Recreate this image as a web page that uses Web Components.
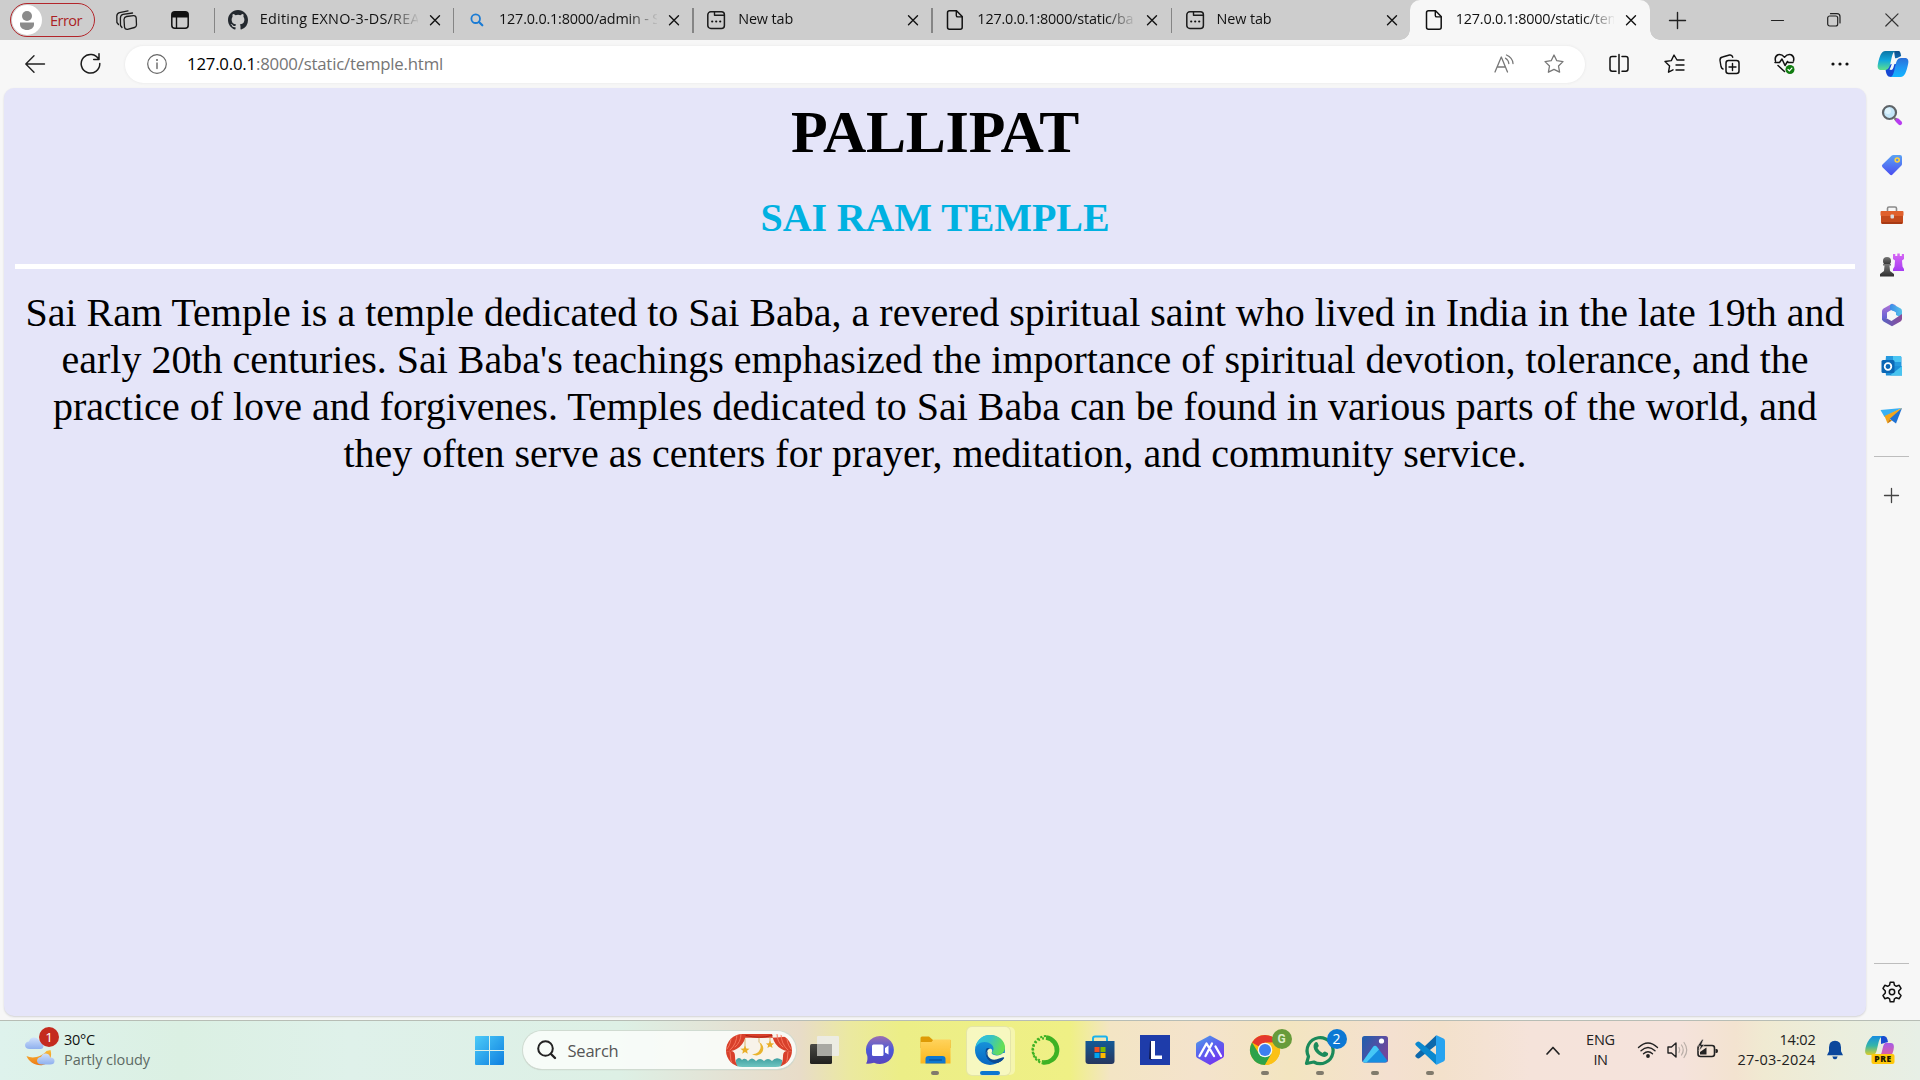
<!DOCTYPE html>
<html lang="en"><head><meta charset="utf-8"><title>temple.html</title>
<style>
html,body{margin:0;height:100%;overflow:hidden}
body{font-family:"Open Sans","Noto Sans",sans-serif;color:#111}
</style></head><body>
<browser-desktop></browser-desktop>
<script>
const svg=(w,h,body,vb)=>`<svg width="${w}" height="${h}" viewBox="${vb||`0 0 ${w} ${h}`}" fill="none" stroke-linecap="round" stroke-linejoin="round">${body}</svg>`;
const L=(d,c='#1b1b1b',w=1.4)=>`<path d="${d}" stroke="${c}" stroke-width="${w}"/>`;
const F=(d,c)=>`<path d="${d}" fill="${c}"/>`;
const G=(id,stops,x2=0,y2=1)=>`<linearGradient id="${id}" x1="0" y1="0" x2="${x2}" y2="${y2}">${stops.map((s,i)=>`<stop offset="${i/(stops.length-1)}" stop-color="${s}"/>`).join('')}</linearGradient>`;
const ICONS={
person:svg(30,30,`<circle cx="15" cy="15" r="15" fill="#fff"/><circle cx="15" cy="11" r="5" fill="#8b8b8b"/><path d="M8 17.5h14v2c0 3-3 5.5-7 5.5s-7-2.500-7-5.500z" fill="#8b8b8b"/>`),
workspaces:svg(22,20,`<path d="M10.500 6.500L17.500 5.700Q20 5.600 20.200 8L20.500 15Q20.300 17 18.500 17.500L11.500 19.300Q8.800 19.500 8.500 17L8 9.500Q8.200 7 10.500 6.500z" stroke="#1b1b1b" stroke-width="1.300"/>`+L('M6 17.500L4.500 15.500 4.400 8Q4.500 5 7 4.400L16.500 3','#1b1b1b',1.3)+L('M2.500 14.500L.9 12.500 .8 6Q.9 3.400 3.500 2.700L12 .9','#1b1b1b',1.3)),
tabactions:svg(18,18,`<rect x=".8" y=".8" width="16.400" height="16.400" rx="3" stroke="#111" stroke-width="1.500"/><path d="M1 3.500Q1 1 3.500 1h11Q17 1 17 3.500V6.500H1z" fill="#111"/>`+L('M5.500 6v11','#111',1.4)),
github:svg(20,20,F('M8 0C3.580 0 0 3.580 0 8c0 3.540 2.290 6.530 5.470 7.590.4.070.55-.17.55-.38v-1.490c-2.230.48-2.700-.94-2.700-.94-.36-.93-.89-1.180-.89-1.180-.73-.5.050-.49.050-.49.800.06 1.230.83 1.230.83.71 1.220 1.870.87 2.330.66.070-.52.280-.87.510-1.070-1.780-.2-3.640-.89-3.640-3.950 0-.87.310-1.590.820-2.150-.08-.2-.36-1.020.080-2.120 0 0 .67-.21 2.200.820a7.600 7.600 0 0 1 4 0c1.530-1.040 2.200-.82 2.200-.82.44 1.100.16 1.920.080 2.120.51.56.82 1.270.82 2.150 0 3.070-1.870 3.750-3.650 3.950.29.25.54.73.54 1.480v2.200c0 .21.15.46.55.38A8 8 0 0 0 16 8c0-4.420-3.580-8-8-8z','#24292f'),'0 0 16 16'),
bluesearch:svg(20,20,`<circle cx="8.700" cy="8.700" r="4.300" stroke="#1a7bd4" stroke-width="1.800"/>`+L('M12 12L15.300 15.300','#1a7bd4',2.2)),
newtab:svg(20,20,`<rect x="1.800" y="1.800" width="16.600" height="16.600" rx="3" stroke="#1b1b1b" stroke-width="1.500"/>`+L('M8.500 2v3.300h9.500')+`<g fill="#111"><circle cx="6.200" cy="11.500" r="1.100"/><circle cx="10.200" cy="11.500" r="1.100"/><circle cx="14.200" cy="11.500" r="1.100"/></g>`),
file:svg(20,20,L('M4.500 .8h7l5.700 5.700v10.700q0 2-2 2H4.500q-2 0-2-2V2.800q0-2 2-2z','#111',1.5)+L('M11.300 1v4.400q0 1.500 1.500 1.500H17','#111',1.4)),
close:svg(12,12,L('M1.500 1.700L10.500 10.700M10.500 1.700L1.500 10.700','#111',1.4)),
plus:svg(17,17,L('M8.500 .5v16M.5 8.500h16','#222',1.4)),
plus2:svg(15,15,L('M7.500 .5v14M.5 7.500h14','#444',1.3)),
min:svg(13,3,L('M.5 1.500h12','#222',1.2)),
restore:svg(14,14,`<rect x=".7" y="3" width="10" height="10" rx="2" stroke="#222" stroke-width="1.200"/>`+L('M3.500 .7h6.500q3 0 3 3V10','#222',1.2)),
wclose:svg(14,14,L('M.8 .8L13 13M13 .8L.8 13','#333',1.2)),
back:svg(20,18,L('M19.500 9H1M9 .8L.8 9L9 17.200','#222',1.4)),
reload:svg(21,21,L('M18.800 6.500A9.300 9.300 0 1 0 19.800 10.500M13.700 6.500h5.300V.8','#1b1b1b',1.5)),
info:svg(20,20,`<circle cx="10" cy="10" r="9.300" stroke="#666" stroke-width="1.200"/>`+L('M10 9v5.500','#666',1.4)+`<circle cx="10" cy="6" r="1" fill="#666"/>`),
readaloud:svg(21,20,L('M1 18L7.300 3L13.500 18M3.200 13h8.200','#777',1.300)+L('M11.500 4.200Q14.500 6 14.800 9.500M12.500 1Q18.500 3.500 19 9.500','#777',1.300)),
star:svg(20,20,L('M10 1l2.800 5.700 6.200.9-4.500 4.400 1.100 6.200L10 15.300l-5.600 2.900 1.100-6.200L1 7.600l6.200-.9z','#777',1.3)),
split:svg(20,20,L('M7 2.500H3.200Q1 2.500 1 4.700V15q0 2.200 2.200 2.200H7M13 2.500h3.800Q19 2.500 19 4.700V15q0 2.200-2.200 2.200H13M10 .5v19','#111',1.5)),
favs:svg(21,20,L('M13 6L10 1 7.300 6.600 1 7.500l4.600 4.400L4.500 18.200 9 15.800M13 6h7M12 11h8M12 16h8','#111',1.4)),
collections:svg(21,20,`<rect x="7" y="6.500" width="13" height="13" rx="2.500" stroke="#111" stroke-width="1.500"/>`+L('M13.500 9.500v7M10 13h7M4 15Q2.500 14.500 2 12.500L1 6.500Q.7 3.500 3.500 3L10.500 1Q13 .5 13.800 3.200','#111',1.4)),
heart:svg(22,21,L('M1.500 8Q.3 3.500 4 1.800 7.500.8 10.500 4.200 13.500.8 17 1.800 20.700 3.500 19.500 8M1 9.500h4.500L8 6l3 6.500 2.500-4 1 1H19M4 12.500l6.500 6','#111',1.5)+`<circle cx="16" cy="16.500" r="4.500" fill="#107c10"/>`+L('M14 16.500l1.400 1.400 2.500-2.700','#fff',1.2)),
dots:svg(18,4,`<g fill="#111"><circle cx="2" cy="2" r="1.600"/><circle cx="9" cy="2" r="1.600"/><circle cx="16" cy="2" r="1.600"/></g>`),
copilot:svg(32,28,`<defs>${G('a',['#0b75a5','#12a8dc','#5ee08c'])}${G('b',['#2b6fd8','#2196f3','#13b5ff'])}${G('d',['#0d4e86','#0f6fb8'])}</defs>`+F('M14 14L8.500 18.500C9 24 10 27 14 27h4l4-13z','#1648d4')+F('M17 1h4c2.500 0 2.500 2 3.200 5l-6 3z','url(#d)')+F('M8.500 1H19C15.500 1 15 7 13.500 13c-1 4-2 7-5.500 7H4c-3 0-4-2.500-3-6.500C2.500 7 4 1 8.500 1z','url(#a)')+F('M23.500 27H13c3.500 0 4-6 5.500-12 1-4 2-7 5.500-7h4c3 0 4 2.500 3 6.500C29.500 21 28 27 23.500 27z','url(#b)')+F('M17.500 8.500L20 8Q18 11 17 15.500T14 20L12.500 19.500Q14 17 15 13T17.500 8.500z','#f2fafa')),
s_search:svg(22,22,L('M14.500 15l1.500 1.500','#777',3)+L('M16.500 16.500L19 19','#b83cf0',4.2)+`<circle cx="8.500" cy="8.500" r="6.500" fill="#c4e6f8" stroke="#5f6468" stroke-width="2.200"/><circle cx="7" cy="7" r="3" fill="#def3fc"/>`),
s_tag:svg(22,22,`<defs>${G('a',['#5aa2f4','#4a4df0'])}</defs>`+F('M12.500 1H19q2 0 2 2v7q0 1-.8 1.800l-8.700 8.700q-1.300 1.300-2.600 0L1.500 13.200q-1.300-1.300 0-2.600L10.500 1.800Q11.300 1 12.500 1z','url(#a)')+`<circle cx="16.200" cy="6" r="2" stroke="#ffd23c" stroke-width="1.600"/>`),
s_tool:svg(24,20,L('M7.500 6V3.500Q7.500 2 9 2h6q1.500 0 1.500 1.500V6','#8a8a8a',1.6)+`<rect x="1" y="6" width="22" height="13" rx="1.500" fill="#c44a1c"/><rect x=".5" y="6" width="23" height="5" rx="1" fill="#e0602c"/><rect x="2" y="17" width="20" height="2" fill="#a83a14"/><rect x="10.500" y="9.500" width="3.500" height="4" rx="1" fill="#d8dce0"/>`),
s_chess:svg(25,24,`<defs>${G('a',['#777','#2f2f2f'])}${G('b',['#d768f4','#a63cf2'])}</defs>`+F('M14 1h2.300v2h2V.500h2.500V3h2V1H25v5l-2 1.500.5 6L25 16v2H14v-2l1.500-2.500.5-6L14 6z','url(#b)')+`<circle cx="8" cy="8" r="4" fill="url(#a)"/>`+F('M4 11h8v1.500h-1.500L11 18l4 3v2.500H1V21l4-3 .5-5.500H4z','url(#a)')),
s_m365:svg(22,24,`<defs>${G('a',['#3d8be8','#58c4ea'],1,0)}${G('b',['#b174d6','#5b60d4'])}${G('d',['#5863c4','#8b4c98'],1,0)}</defs>`+F('M11 .8L2.500 5.500Q1 6.500 1 8v9l5-2V9.500L14.500 4.500V2z','url(#b)')+F('M11 .8l8.700 4.800Q21 6.500 21 8v7l-6-3V9.500L9 6.500V2z','url(#a)')+F('M1 16q0 1.500 1.500 2.400L11 23.200l8.500-4.800Q21 17.500 21 16V11l-6 4-4.500 3L5 15z','url(#d)')+`<circle cx="11" cy="12" r="4" fill="#f7f7f7"/>`),
s_outlook:svg(22,22,`<path d="M5 1h14q1.500 0 1.500 1.500V12H4z" fill="#2599df"/><path d="M12 1h8v6h-8z" fill="#4ac5f3"/><path d="M4 11l17 0v9.500H5z" fill="#1b8ed8"/><path d="M21 11L9 20.500h12z" fill="#48c4f0"/><rect x=".5" y="5" width="13" height="13" rx="1.500" fill="#0b67b5"/><circle cx="7" cy="11.500" r="3.300" stroke="#fff" stroke-width="1.800"/>`),
s_plane:svg(24,18,F('M.5 3L22 1 4.500 10z','#38b0f4')+F('M22 1L16 16.500 8.500 11z','#1e72d4')+F('M4.500 9L22 1 9 12.500 7.500 16.500z','#f2a51c')+F('M7.500 16.500L9 12l3 1.500z','#c97a0a')),
gear:svg(22,22,L('M8.600 4.200L9.200 1.200h3.600l.6 3 1.900 1.100 2.900-1 1.800 3.100L17.700 9.900v2.200l2.300 2.500-1.800 3.100-2.900-1-1.900 1.100-.6 3H9.200l-.6-3-1.900-1.100-2.900 1L2 14.600l2.300-2.500V9.900L2 7.400l1.800-3.100 2.900 1z','#111',1.5)+`<circle cx="11" cy="11" r="2.700" stroke="#111" stroke-width="1.500"/>`),
weather:svg(34,34,`<defs>${G('a',['#cfe0fb','#8fb0ee'])}${G('b',['#f8bd3a','#ee7a15'])}</defs>`+F('M2.500 22c6 3 15 1 20-5l4-1c2 6-1 11-4 13.500-7 4.500-17 0-20-7.500z','url(#b)')+F('M6 15q-5 0-5-4Q1.500 7.500 5 7.500q1-4 5-4t5.500 4q4 0 4 4t-4 3.500z','url(#a)')+F('M18 30.500q-5 0-5-4 .5-3.500 4-3.500 1.500-4 5-3.500 4 .5 4 4 4.500 0 4.500 3.500T26 30.500z','url(#a)')),
start:svg(30,30,`<defs>${G('a',['#4ccbf8','#0e7fe0'],1,1)}</defs>`+F('M1 0h13v14H0V1q0-1 1-1zM15 0h13q1 0 1 1v13H15zM0 15h14v14H1q-1 0-1-1zM15 15h14v13q0 1-1 1H15z','url(#a)')),
search:svg(20,20,`<circle cx="8.500" cy="8.500" r="7.300" stroke="#222" stroke-width="2"/>`+L('M14 14L18 18','#222',2.4)),
art:svg(66,33,`<defs><clipPath id="c"><rect width="66" height="33" rx="16.500"/></clipPath>${G('a',['#3f9fa0','#74c9c4'])}</defs><g clip-path="url(#c)"><rect width="66" height="33" fill="#f8f3ea"/><path d="M10 26q3-4 6 0 3-3 6 1 4-5 8 0 4-4 8 0 4-4 8 0 4-5 10-1v8H10z" fill="url(#a)"/><path d="M0 0h66v2Q33 6 0 2zM0 0h20Q18 16 0 18zM66 0H46Q48 16 66 18z" fill="#d8402b"/><path d="M0 18Q9 15 9 22T12 33H0zM66 18Q57 15 57 22T54 33H66z" fill="#d8402b"/>${L('M5 0Q6 9 1 15M11 0Q11 10 4 16M15 0Q15 8 9 13M61 0Q60 9 65 15M55 0Q55 10 62 16M51 0Q51 8 57 13M4 18Q4 26 7 33M62 18Q62 26 59 33','#f5765f',1)}${L('M20 1.500Q33 5 46 1.500','#a82418',1)}${L('M19 5v8M44 3v5M33 4v4','#c99b44',.7)}<path d="M33 8a7 7 0 1 1-7 12 7.500 7.500 0 0 0 7-12z" fill="#e9b42e"/><path d="M19 11.500l1.300 3 3.200.2-2.500 2 .8 3-2.800-1.600-2.800 1.600.8-3-2.500-2 3.200-.2zM44 6.500l1.200 2.700 2.900.2-2.200 1.900.7 2.800-2.600-1.500-2.600 1.500.7-2.800-2.200-1.900 2.900-.2z" fill="#e9ae28"/></g>`),
taskview:svg(32,30,`<defs>${G('a',['#4a4a45','#20201e'])}</defs><rect x="1" y="9" width="22" height="20" rx="1.500" fill="url(#a)"/><rect x="8" y="1" width="22" height="20" rx="1" fill="#ecece8" opacity=".9"/><path d="M8 9h15v12H8z" fill="#a9a9a3"/>`),
chat:svg(30,30,`<defs>${G('a',['#9b6fb0','#4a58d8','#5a46bd'])}</defs>`+F('M15 1a14 14 0 1 1-6 26.700Q4 29 1 28.500 3 26 2.300 21A14 14 0 0 1 15 1z','url(#a)')+`<rect x="7" y="9.500" width="11.500" height="11.500" rx="1.500" fill="#fff"/><path d="M20 13l3.500-2.500v9L20 17.500z" fill="#fff"/>`),
explorer:svg(31,28,`<defs>${G('a',['#ffd35c','#fbb71c'])}</defs>`+F('M.5 2q0-1.500 1.500-1.500h7l4 3.500h17.500v8H.5z','#de9a05')+`<path d="M.5 6h11l2-2.500h17v24H.5z" fill="url(#a)"/><path d="M5.500 27.500V23q0-3 3-3h14q3 0 3 3v4.500z" fill="#0f78cf"/>`+L('M9.500 24h12','#07458c',1)),
edge:svg(32,32,`<defs>${G('a',['#2bc3e8','#35c1c8','#65df55'],1,.3)}${G('b',['#1b9ee0','#0867c2'])}</defs>`+`<circle cx="16" cy="16" r="15" fill="url(#b)"/>`+F('M1.500 14C3 5 9 1 16 1c9 0 15 6 15 12.500 0 5-4 7.500-8 7.500-3 0-5-1-5-2.200 0-1 1.500-1.600 1.500-4.300C19.500 11 15.500 8 10.500 8 6 8 2.500 11 1.500 14z','url(#a)')+F('M12 15c-2 7 3 14 10 14 3 0 6-1.500 7.500-4.200 0-1-1-.9-1.500-.6-6 3-13 0-14-4.500-.5-2 .5-4.500 2-5.500-2-.7-3.500 0-4 .8z','#0c4a94')+F('M13.500 16.500C11 20.500 14 27 21 26.500c4-.3 7-1.500 9-3 1 0 1.500.8 1 1.500l1 1V19l-3 0c-2 2.300-6 3-9 2-1.500-.6-2.600-1.300-2.300-2.500.3-.8.5-1 .5-2 0-2-3.500-2.500-4.700 0z','#f7f9c9')+F('M14 17c-2 5 2 9.500 8 8.500l7-2.200c1.200-.5 1.500.5.7 1.500C27 28 23 30 18 28 12 25 11 20 14 17z','#0c4a94')),
anaconda:svg(32,32,`<path d="M17 3.500A12.500 12.500 0 1 1 14 28.400" stroke="#3eb224" stroke-width="4.600" stroke-linecap="butt"/><g stroke="#3eb224" stroke-linecap="butt"><path d="M17 2A14 14 0 0 0 14 29.500" stroke-width="2.200" stroke-dasharray="2.200 1.600"/><path d="M17 4.500A11.500 11.500 0 0 0 14 27.400" stroke-width="2.400" stroke-dasharray="1.800 2.300" stroke-dashoffset="2"/></g>`),
store:svg(30,30,`<defs>${G('a',['#145a96','#26365e'])}</defs>`+L('M8 7V3.500Q8 1.500 10 1.500H20.500Q22 1.500 22 3.500V7','#19b2ed',2)+`<path d="M.5 6h29v20q0 3-3 3h-23q-3 0-3-3z" fill="url(#a)"/><path d="M9.500 12h5v5h-5z" fill="#f25022"/><path d="M15.500 12h5v5h-5z" fill="#7fba00"/><path d="M9.500 18h5v5h-5z" fill="#00a4ef"/><path d="M15.500 18h5v5h-5z" fill="#ffb900"/>`),
lapp:svg(30,30,`<path d="M0 0h30v30H0z" fill="#1e3caa"/><path d="M10 6l2 1v18l-3-1z" fill="#111c52"/><path d="M11 6h4v14.500h7V24H11z" fill="#fff"/>`),
arc:svg(30,32,`<defs>${G('a',['#4fa3e8','#5a63ee','#7338f0'],.6,1)}</defs>`+F('M15 1.500L28 8.500Q29 9 29 10.500v11Q29 23 28 23.700L15 31 2 23.700Q1 23 1 21.500v-11Q1 9 2 8.500z','url(#a)')+L('M4.500 22L11.500 9.500 19 22M10.500 22L17 9.500 M20.500 12.500L26 22','#fff',2.3)),
chrome:svg(32,32,`<circle cx="16" cy="16" r="15" fill="#fbbc05"/>`+F('M16 16L3 8.500A15 15 0 0 1 29 8.500L16 9z','#e4382c')+F('M3 8.500A15 15 0 0 0 16 31L22.500 19.500 16 16 9.500 19z','#2da24a')+F('M29 8.500H16L22.500 20 16 31A15 15 0 0 0 29 8.500z','#fbc116')+`<circle cx="16" cy="16" r="7.300" fill="#f6f8f4"/><circle cx="16" cy="16" r="6" fill="#3d7ff0"/>`),
whatsapp:svg(32,32,L('M2.500 29.500l2-7A13 13 0 1 1 9.800 28z','#1b8a5a',3.2)+F('M11 8.500c1-1 2.300-.6 2.700.5l1 2.500c.3.800-1 2-1.200 2.400 1 2.200 3 4 5.200 5 .5-.2 1.500-1.600 2.300-1.300l2.500 1.200c1 .5.700 2-.2 3-1.500 1.500-3.500 1.500-6.300.2-3-1.500-5.500-4-6.800-6.600-1-2.300-1-5.200.8-6.900z','#1b8a5a')),
photos:svg(26,27,`<defs>${G('a',['#1d5fae','#71479d'],1,.5)}</defs><rect width="26" height="26.500" rx="2.500" fill="url(#a)"/>`+F('M.8 25.500L11 11Q13 8.500 15 11L25.300 24.500Q24.500 26.500 23 26.500H3Q1.500 26.500 .8 25.500z','#168ee0')+F('M.8 25.500L11 11Q13 8.500 15 11L17 13.500 4.500 26.500H3Q1.500 26.500 .8 25.500z','#45c8f6')+`<circle cx="19.500" cy="5" r="2.600" fill="#fff"/>`),
vscode:svg(32,32,F('M22 1.500L2 20.500Q.3 22 2 23.200l1.500 1q1.300.6 2.500-.4L23 10.500z','#0d68ab')+F('M22 30.500L2 11.500Q.3 10 2 8.800l1.500-1q1.300-.6 2.500.4L23 21.500z','#0a88cf')+F('M22.500 1.200l7 3.300Q31 5.300 31 7v18q0 1.700-1.500 2.500l-7 3.300Q22 31 22 30V2Q22 1 22.500 1.200z','#27a3f0')),
chev:svg(14,9,L('M1 8L7 1.500 13 8','#222',1.7)),
wifi:svg(22,18,L('M1.500 6.500Q11-2.500 20.500 6.500M4 9.800Q11 3 18 9.800M6.500 12.800Q11 8.500 15.500 12.800','#222',1.4)+`<circle cx="11" cy="15" r="1.900" fill="#222"/>`),
vol:svg(21,18,L('M1 6v6h3.500l4.500 4V2L4.500 6z','#222',1.4)+L('M12 6.500q1.500 2.500 0 5M14.500 4q3.500 5 0 10M17 1.500q5.500 7.500 0 15','#b8aea7',1.2)),
battery:svg(21,20,`<rect x="1" y="5.500" width="16.500" height="11" rx="2.500" stroke="#222" stroke-width="1.600"/><path d="M18.500 9h1q1.500 0 1.500 2t-1.500 2h-1z" fill="#222"/><path d="M3 14.500V12L9.500 7.500v7z" fill="#222"/><path d="M5 -.5L.5 6h3L2 11 7.500 4.500H4.500L6.500 -.5z" fill="#222" stroke="#f4e3da" stroke-width=".6"/>`),
bell:svg(16,20,F('M8 .8q6 0 6 6.500v4l2 4H0l2-4v-4q0-6.500 6-6.500zM5.300 16.500h5.400Q10 19.300 8 19.300T5.300 16.500z','#0b479c')),
copilotpre:svg(32,30,`<defs>${G('a',['#168de0','#34b6a8','#e8cf20'])}${G('b',['#a45be8','#f0608f'])}</defs>`+F('M17 1h3q3 0 4 6l-7 2z','#174cd0')+F('M8.500 1H19Q15.500 1 13.500 12T7 20H4Q0 20 1.500 13T8.500 1z','url(#a)')+F('M13 23q4-1 5.500-9T24 8h3q4 0 2.500 7T23 24z','url(#b)')+`<rect x="7.500" y="19" width="23" height="10" rx="2" fill="#ffc80a"/><text x="19" y="27.200" font-size="8.500" font-family="Open Sans,sans-serif" font-weight="800" fill="#201800" text-anchor="middle" letter-spacing=".5">PRE</text>`)
};
function define(name,css,html,after){
  const t=document.createElement('template');
  customElements.define(name,class extends HTMLElement{
    connectedCallback(){
      if(this.shadowRoot)return;
      const r=this.attachShadow({mode:'open'});
      t.innerHTML=`<style>${css}</style>${typeof html==='function'?html(this):html}`;
      r.append(t.content.cloneNode(true));
      if(after)after(this,r);
    }
  });
}
// Icon centred in a box of the given width.
define('ui-icon',':host{display:flex;flex:none;align-items:center;justify-content:center}svg{display:block;overflow:visible}',
  e=>ICONS[e.getAttribute('name')],(e)=>{const w=e.getAttribute('w');if(w)e.style.width=w+'px'});

define('browser-tab',`
:host{display:flex;align-items:center;width:239.2px;height:40px;flex:none;box-sizing:border-box}
.sep{width:1.5px;height:25px;background:#858585;margin-right:12.5px}
:host([active]) .sep{visibility:hidden}
:host([active]){background:#f7f7f7;border-radius:10px 10px 0 0;width:240px}
.t{width:158px;margin:0 11px 0 12px;padding-bottom:2px;overflow:hidden;font-size:14.4px;line-height:22px;-webkit-mask-image:linear-gradient(90deg,#000 128px,transparent 160px)}
`,e=>`<span class="sep"></span><ui-icon w="20" name="${e.getAttribute('icon')}"></ui-icon><div class="t"><slot></slot></div><ui-icon w="12" name="close"></ui-icon>`);

define('tab-strip',`
:host{display:flex;height:40px;background:#cdcdcd;align-items:center}
.profile{display:flex;align-items:center;box-sizing:border-box;width:85px;height:34px;border:1.5px solid #b3262b;border-radius:17px;margin-left:10px;color:#ab1f25;font-size:14.6px;gap:8px;padding-left:1px}
.profile fit-text{padding-bottom:1px}
.ws{margin-left:21px}.ta{margin:0 25.300px 0 32.500px}
.new{margin-left:19px}.min{margin-left:85px}.res{margin-left:43px}.cl{margin-left:44px}
.curve{width:10px;height:10px;align-self:flex-end}
.l{background:radial-gradient(circle at 0 0,transparent 9.500px,#f7f7f7 10px);margin-left:-10px}
.r{background:radial-gradient(circle at 100% 0,transparent 9.500px,#f7f7f7 10px);margin-right:-10px}
`,`<div class="profile"><ui-icon name="person"></ui-icon><fit-text w="32">Error</fit-text></div>
<ui-icon class="ws" name="workspaces"></ui-icon><ui-icon class="ta" name="tabactions"></ui-icon>
<browser-tab icon="github"><fit-text w="160">Editing EXNO-3-DS/REA</fit-text></browser-tab>
<browser-tab icon="bluesearch"><fit-text w="161">127.0.0.1:8000/admin - S</fit-text></browser-tab>
<browser-tab icon="newtab"><fit-text w="55">New tab</fit-text></browser-tab>
<browser-tab icon="file"><fit-text w="156">127.0.0.1:8000/static/ba</fit-text></browser-tab>
<browser-tab icon="newtab"><fit-text w="55">New tab</fit-text></browser-tab>
<span class="curve l"></span><browser-tab active icon="file"><fit-text w="165">127.0.0.1:8000/static/tem</fit-text></browser-tab><span class="curve r"></span>
<ui-icon class="new" name="plus"></ui-icon><ui-icon class="min" name="min"></ui-icon><ui-icon class="res" name="restore"></ui-icon><ui-icon class="cl" name="wclose"></ui-icon>`);

define('tool-bar',`
:host{display:flex;height:47px;background:#f7f7f7;align-items:center}
.bar{display:flex;align-items:center;width:1460px;height:37px;border-radius:19px;background:#fff;box-shadow:0 0 3px #e4e4e4;box-sizing:border-box;padding-left:22px;margin-left:24px;font-size:16.8px;color:#757575;margin-top:1px}
b{font-weight:400;color:#000}.u{margin-left:20px;flex:1;padding-bottom:2px}.st{margin:0 21px 0 29px}
`,`<ui-icon name="back" style="margin-left:25px"></ui-icon><ui-icon name="reload" style="margin-left:35px"></ui-icon>
<div class="bar"><ui-icon name="info"></ui-icon><div class="u"><fit-text w="256"><b>127.0.0.1</b>:8000/static/temple.html</fit-text></div><ui-icon name="readaloud"></ui-icon><ui-icon class="st" name="star"></ui-icon></div>
<ui-icon w="55.400" style="margin-left:6.500px" name="split"></ui-icon><ui-icon w="55.400" name="favs"></ui-icon><ui-icon w="55.400" name="collections"></ui-icon><ui-icon w="55.400" name="heart"></ui-icon><ui-icon w="54" name="dots"></ui-icon><ui-icon w="52" name="copilot"></ui-icon>`);

define('temple-page',`
:host{display:block;box-sizing:border-box;width:1861.5px;height:928.5px;margin:.5px 0 0 4px;padding:10.5px 10.5px 0 11px;border-radius:10px;background:#e5e5f9;box-shadow:0 1px 2px #d2d2d4;text-align:center;font-family:"Liberation Serif",serif;color:#000;flex:none}
h1{margin:0;font-size:60px;line-height:68px}
h2{margin:29px 0 0;font-size:40px;line-height:46px;color:#00b1e1}
.rule{height:5px;background:#fff;margin:23px 0 20px}
p{margin:0;font-size:40px;line-height:47px}
`,`<h1><fit-text w="288">PALLIPAT</fit-text></h1><h2><fit-text w="349">SAI RAM TEMPLE</fit-text></h2><div class="rule"></div>
<p><fit-text w="1819">Sai Ram Temple is a temple dedicated to Sai Baba, a revered spiritual saint who lived in India in the late 19th and</fit-text><br><fit-text w="1747">early 20th centuries. Sai Baba's teachings emphasized the importance of spiritual devotion, tolerance, and the</fit-text><br><fit-text w="1764">practice of love and forgivenes. Temples dedicated to Sai Baba can be found in various parts of the world, and</fit-text><br><fit-text w="1183">they often serve as centers for prayer, meditation, and community service.</fit-text></p>`);

define('side-bar',`
:host{display:flex;flex-direction:column;align-items:center;flex:1;padding-right:2px}
ui-icon{height:50.200px}.line{width:35px;height:1px;background:#bdbdbd}.sp{flex:1}
`,`<ui-icon name="s_search" style="margin-top:2.500px"></ui-icon><ui-icon name="s_tag"></ui-icon><ui-icon name="s_tool"></ui-icon><ui-icon name="s_chess"></ui-icon><ui-icon name="s_m365"></ui-icon><ui-icon name="s_outlook"></ui-icon><ui-icon name="s_plane"></ui-icon>
<span class="line" style="margin-top:15px"></span><ui-icon name="plus2" style="margin-top:14px"></ui-icon><span class="sp"></span><span class="line"></span><ui-icon name="gear" style="height:56px"></ui-icon>`);

define('task-app',`
:host{display:grid;place-items:center;width:55px;height:60px;position:relative;flex:none}
:host([run])::after{content:"";position:absolute;bottom:6px;width:8px;height:4px;border-radius:2px;background:#807a6c}
:host([active])::after{width:20px;background:#0b76d0}
:host([active])::before{content:"";position:absolute;left:4px;top:6px;width:43px;height:48px;border-radius:5px;background:rgba(255,255,240,.55);box-shadow:0 0 0 1px #e4e5a8,5px 0 0 0 rgba(255,255,235,.4)}
ui-icon{position:relative;margin-bottom:2px}
.b{position:absolute;left:34px;top:8px;width:20px;height:20px;border-radius:50%;font-size:14px;line-height:20px;text-align:center;color:#fff}
`,e=>`<ui-icon name="${e.getAttribute('icon')}"></ui-icon>${e.hasAttribute('badge')?`<span class="b" style="background:${e.getAttribute('tint')};${e.getAttribute('badge')==='G'?'font:bold 12px/20px Roboto,sans-serif;color:#dcebc8':''}">${e.getAttribute('badge')}</span>`:''}`);

define('task-bar',`
:host{display:flex;align-items:center;height:60px;box-sizing:border-box;border-top:1px solid #b7bdb5;background:linear-gradient(90deg,#def2ec 0,#dbf0e3 180px,#dff1ea 350px,#ddf0e5 620px,#e4e2d4 730px,#e8dcc8 800px,#ebe9a0 850px,#ecee87 900px,#eff085 1070px,#f3e5c4 1110px,#f4e3cc 1200px,#f3e5c0 1290px,#f4e0d0 1390px,#f3e1cb 1440px,#f5e3da 1530px,#f5e3dc 1680px,#f3e3d0 1735px,#f0ead2 1765px,#ebeedd 1840px,#e7efe6 1920px)}
.w{display:flex;align-items:center;position:relative;margin-left:24px;width:451px;font-size:14.5px;line-height:20px}
.w div{margin-left:6px;padding-bottom:2px}.w .g{color:#5d6a64}
.n{position:absolute;left:15px;top:-3px;width:20px;height:20px;border-radius:50%;background:#c42b1f;color:#fff;text-align:center;font-size:13.500px}
.s{display:flex;align-items:center;box-sizing:border-box;width:273px;height:38px;border-radius:19px;margin:0 2px 1px 17.500px;padding:0 4px 0 14px;background:rgba(251,253,250,.88);box-shadow:0 0 0 1px #d0dbd1,0 1px 1px #b0b8b0;font-size:16.500px;color:#555}
.s span{flex:1;margin-left:11px}
.tray{display:flex;align-items:center;font-size:14.500px;line-height:20px;color:#222;margin-left:88px}
.tray div{padding-bottom:2px}.tray ui-icon{padding-bottom:1px}
`,`<div class="w"><ui-icon name="weather"></ui-icon><span class="n">1</span><div><fit-text w="31">30°C</fit-text><br><fit-text w="86" class="g">Partly cloudy</fit-text></div></div>
<ui-icon name="start"></ui-icon>
<div class="s"><ui-icon name="search"></ui-icon><span><fit-text w="51">Search</fit-text></span><ui-icon name="art"></ui-icon></div>
<task-app icon="taskview"></task-app><task-app icon="chat"></task-app><task-app icon="explorer" run></task-app><task-app icon="edge" run active></task-app><task-app icon="anaconda"></task-app><task-app icon="store"></task-app><task-app icon="lapp"></task-app><task-app icon="arc"></task-app><task-app icon="chrome" run badge="G" tint="#679b3a"></task-app><task-app icon="whatsapp" run badge="2" tint="#0c78d4"></task-app><task-app icon="photos" run></task-app><task-app icon="vscode" run></task-app>
<div class="tray"><ui-icon name="chev"></ui-icon><div style="width:50px;margin-left:16px;text-align:center;margin-right:11px"><fit-text w="29">ENG</fit-text><br><fit-text w="14">IN</fit-text></div><ui-icon name="wifi"></ui-icon><ui-icon name="vol" style="margin-left:8px"></ui-icon><ui-icon name="battery" style="margin-left:9px"></ui-icon>
<div style="width:98px;text-align:right"><fit-text w="36">14:02</fit-text><br><fit-text w="78">27-03-2024</fit-text></div><ui-icon name="bell" style="margin-left:11px"></ui-icon><ui-icon name="copilotpre" style="margin-left:21px"></ui-icon></div>`);

define('browser-desktop',`
:host{display:flex;flex-direction:column;width:1920px;height:1080px;background:#f7f7f7;overflow:hidden}
.m{display:flex;height:933px;flex:none}tab-strip,tool-bar,task-bar{flex:none}
`,`<tab-strip></tab-strip><tool-bar></tool-bar><div class="m"><temple-page></temple-page><side-bar></side-bar></div><task-bar></task-bar>`);

// Spreads its text over a set width through letter spacing.
define('fit-text',':host{display:inline-block;white-space:nowrap}span{display:inline-block}','<span><slot></slot></span>',(e,r)=>{
  const s=r.querySelector('span'),n=e.textContent.length,w=+e.getAttribute('w');
  const d=(w-s.getBoundingClientRect().width)/n;
  s.style.letterSpacing=d+'px';
});
</script></body></html>
